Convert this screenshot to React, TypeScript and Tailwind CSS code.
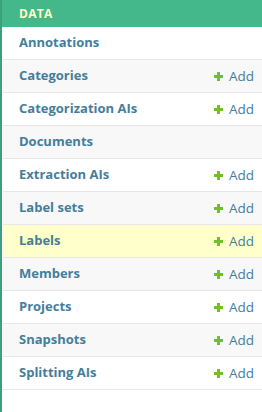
const models = [
  { name: "Annotations", add: false },
  { name: "Categories", add: true },
  { name: "Categorization AIs", add: true },
  { name: "Documents", add: false },
  { name: "Extraction AIs", add: true },
  { name: "Label sets", add: true },
  { name: "Labels", add: true, active: true },
  { name: "Members", add: true },
  { name: "Projects", add: true },
  { name: "Snapshots", add: true },
  { name: "Splitting AIs", add: true },
];

function Plus() {
  return (
    <svg width="9" height="9" viewBox="0 0 9 9" className="mr-[6px]">
      <path d="M3 0h3v3h3v3H6v3H3V6H0V3h3z" fill="#70bf2b" />
    </svg>
  );
}

export default function App() {
  return (
    <div className="min-h-screen w-[262px] bg-white border-l-2 border-[#3d9f7b] font-['Open_Sans',sans-serif]">
      <div className="h-[27px] bg-[#44b78b] pl-[17px] flex items-center text-[12px] font-bold tracking-[0.3px] text-[#ffffc4]">
        DATA
      </div>
      <div className="ml-px">
        {models.map((m, i) => (
          <div
            key={m.name}
            className={`h-[33px] border-b border-[#e6e6e6] flex items-center justify-between pl-[16px] pr-[8px] text-[13px] ${
              m.active ? "bg-[#ffffcc]" : i % 2 ? "bg-[#f8f8f8]" : "bg-white"
            }`}
          >
            <span className="font-bold text-[#447e9b]">{m.name}</span>
            {m.add && (
              <span className="flex items-center text-[13.5px] text-[#447e9b]">
                <Plus />
                Add
              </span>
            )}
          </div>
        ))}
      </div>
    </div>
  );
}
